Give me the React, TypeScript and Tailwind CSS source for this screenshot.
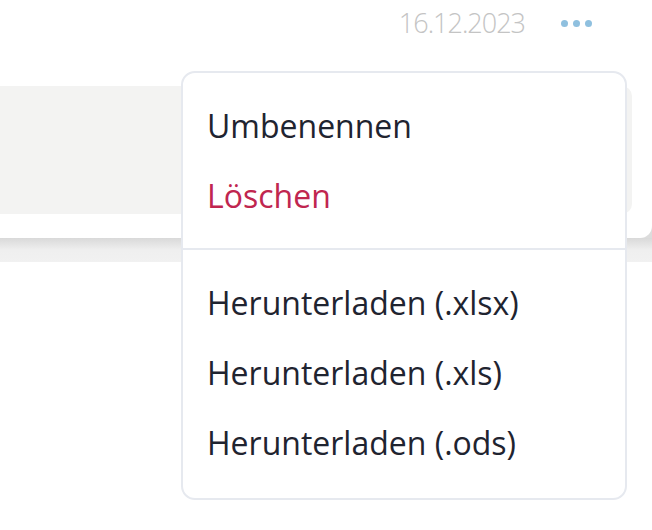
import { useState } from "react";

const font = { fontFamily: '"Open Sans", "Noto Sans", sans-serif' };

function MenuItem({ label, danger }: { label: string; danger?: boolean }) {
  return (
    <button
      className={
        "flex h-[70px] w-full items-center px-[24px] text-left text-[32px] " +
        (danger ? "text-[#c0264f]" : "text-[#1f2430]")
      }
    >
      {label}
    </button>
  );
}

export default function App() {
  const [open] = useState(true);

  return (
    <div className="relative h-[530px] w-[652px] overflow-hidden bg-white" style={font}>
      <div className="flex h-[46px] items-center justify-end gap-[36px] pr-[60px]">
        <span className="text-[27px] font-light tracking-[-1px] text-[#c4c4c4]">16.12.2023</span>
        <button className="flex items-center gap-[5px]">
          <span className="h-[7px] w-[7px] rounded-full bg-[#8fc0df]" />
          <span className="h-[7px] w-[7px] rounded-full bg-[#8fc0df]" />
          <span className="h-[7px] w-[7px] rounded-full bg-[#8fc0df]" />
        </button>
      </div>

      <div className="bg-[#dcdcdc]">
        <div className="rounded-br-[12px] bg-white pb-[24px] pr-[20px] pt-[40px]">
          <div className="h-[128px] rounded-r-[10px] bg-[#f3f3f2]" />
        </div>
        <div className="h-[24px] bg-gradient-to-b from-[#d9d9d9] via-[#efefef] to-[#f1f1f1]" />
      </div>

      {open && (
        <div className="absolute left-[181px] top-[71px] w-[446px] rounded-[14px] border-2 border-[#e6e9ef] bg-white">
          <div className="pb-[17px] pt-[18px]">
            <MenuItem label="Umbenennen" />
            <MenuItem label="Löschen" danger />
          </div>
          <div className="border-t-2 border-[#e6e9ef] pb-[20px] pt-[18px]">
            <MenuItem label="Herunterladen (.xlsx)" />
            <MenuItem label="Herunterladen (.xls)" />
            <MenuItem label="Herunterladen (.ods)" />
          </div>
        </div>
      )}
    </div>
  );
}
